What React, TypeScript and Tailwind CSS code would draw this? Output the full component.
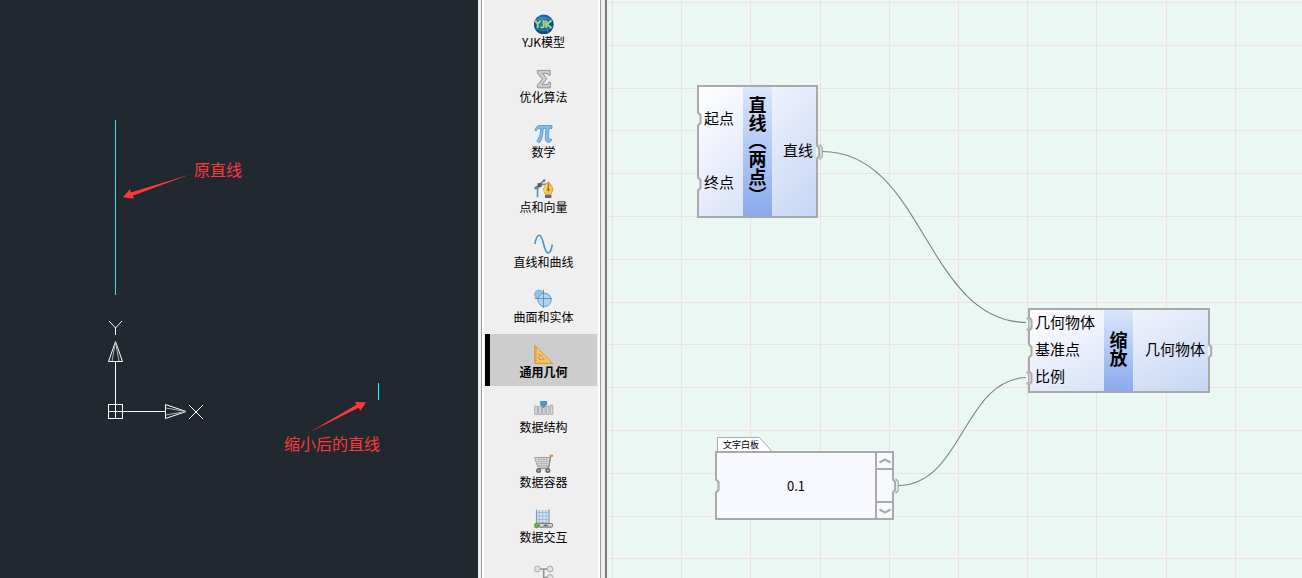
import type { ReactNode } from "react";

const ICON = "block h-5 w-5 shrink-0";

function GlobeIcon() {
  return (
    <svg className={ICON} viewBox="0 0 20 20" aria-hidden="true">
      <defs>
        <radialGradient id="globe" cx="45%" cy="35%" r="65%">
          <stop offset="0" stopColor="#2f8fc4" />
          <stop offset="0.6" stopColor="#15589c" />
          <stop offset="1" stopColor="#0c3c7c" />
        </radialGradient>
      </defs>
      <circle cx="9.800" cy="10.500" r="9.900" fill="url(#globe)" />
      <path d="M1.500 7C6 3 13 2.500 18 6.500M2 14C7 17.500 14 17 18.500 13M5 2C9 5 13 11 14 18.500" fill="none" stroke="#5fb2dc" strokeWidth="0.600" />
      <path d="M1.200 6.500l2.500 3.700L6.400 6.500M3.700 10v4M9.800 6.500v5.500c0 1.800-2.700 2.100-3.300.5M12.200 6.500v7.500M17.500 6.500l-4.800 3.800 4.800 3.700" fill="none" stroke="#a4dc74" strokeWidth="1.900" />
    </svg>
  );
}

function SigmaIcon() {
  return (
    <svg className={ICON} viewBox="0 0 20 20" aria-hidden="true">
      <path d="M3.400 1.400h12.800v4.800h-2L13.400 4.400H8.800l4.200 5.300-4.800 5.700h5.400l1-2.200h2l-.5 5.600H3.400v-2.600l5-6.200-5-6z" fill="#cbcbcb" stroke="#959595" strokeWidth="1" />
    </svg>
  );
}

function PiIcon() {
  return (
    <svg className={ICON} viewBox="0 0 20 20" aria-hidden="true">
      <path d="M1 6.500C1.800 3 3.300 1.500 6 1.500h12v2.900h-3c-.3 3.600-.5 7-.2 9.400.3 1.800 1.500 2.200 2.900 1.300-.3 2.200-1.600 3.400-3.300 3.200-2.600-.2-3.200-2.300-3.100-5.300.1-2.900.4-5.800.6-8.600H9.200C9.100 9 8.500 13 7 16.500c-.8 1.800-2 2.500-3 1.900-1.300-.8-1-2.200.1-3.300C6 12.300 6.600 8.200 6.700 4.400H5.800c-1.700 0-2.500.6-3.300 2.300z" fill="#7fbdec" stroke="#4b8fc8" strokeWidth="0.800" />
    </svg>
  );
}

function VectorIcon() {
  return (
    <svg className={ICON} viewBox="0 0 20 20" aria-hidden="true">
      <path d="M3.500 18.500V12C3.500 7 7 5 12 5" fill="none" stroke="#4f95bd" strokeWidth="1.600" />
      <path d="M1 9.500L10.500 1" stroke="#686868" strokeWidth="1.200" />
      <circle cx="1.800" cy="9" r="1.400" fill="#777" />
      <circle cx="10.200" cy="1.600" r="1.300" fill="#777" />
      <rect x="3.600" y="4.100" width="4" height="4" fill="#5c5c5c" />
      <path d="M14.300 2.500c2 2.400 4.700 5.600 4.700 8.300l-2 4.700h-5.500l-2-4.700c0-2.700 2.800-5.900 4.800-8.300z" fill="#f6c445" stroke="#c8892b" strokeWidth="0.700" />
      <path d="M14.300 4v6" stroke="#916520" strokeWidth="0.900" />
      <circle cx="14.300" cy="10.800" r="1.200" fill="#8a6327" />
      <path d="M12.800 5.500c-2 2.800-2.600 4.500-1.500 7.500" fill="none" stroke="#ffe99b" strokeWidth="1.100" />
      <rect x="11" y="16" width="6.400" height="3" fill="#686868" />
    </svg>
  );
}

function CurveIcon() {
  return (
    <svg className={ICON} viewBox="0 0 20 20" aria-hidden="true">
      <path d="M.8 10C1.800 5 3 1.200 5.300 1.200c4.300 0 4.300 17.800 8.700 17.800 2.200 0 3.500-3.500 4.300-8.500" fill="none" stroke="#4697c6" strokeWidth="1.600" />
    </svg>
  );
}

function SolidIcon() {
  return (
    <svg className={ICON} viewBox="0 0 20 20" aria-hidden="true">
      <circle cx="5.200" cy="5.600" r="4.600" fill="#91c4ea" stroke="#76a8cf" strokeWidth="0.800" />
      <circle cx="10.500" cy="10.800" r="6.700" fill="#acd4f2" stroke="#5f9dc8" strokeWidth="1" />
      <path d="M9.500 0.500v18.500M0.500 9.500h17.500" stroke="#5d83a1" strokeWidth="0.800" />
    </svg>
  );
}

function SetSquareIcon() {
  return (
    <svg className={ICON} viewBox="0 0 20 20" aria-hidden="true">
      <path fillRule="evenodd" d="M.8 1.200l18 18.200H.8zM5.300 10v5.300h5.200z" fill="#f5c364" stroke="#d0912e" strokeWidth="0.900" />
      <path d="M1.300 4.500h1.500M1.300 7h1.500M1.300 9.500h1.500M1.300 12h1.500M1.300 14.500h1.500M1.300 17h1.500" stroke="#a76d20" strokeWidth="0.700" />
    </svg>
  );
}

function StructureIcon() {
  return (
    <svg className={ICON} viewBox="0 0 20 20" aria-hidden="true">
      <g fill="#d6d6d6" stroke="#a6a6a6" strokeWidth="0.900">
        <rect x="0.600" y="7" width="2.800" height="8.500" rx="0.500" />
        <rect x="4.600" y="7" width="2.800" height="8.500" rx="0.500" />
        <rect x="8.500" y="7.500" width="2.700" height="8" rx="0.500" />
        <rect x="12.200" y="7" width="2.800" height="8.500" rx="0.500" />
        <rect x="16" y="6" width="2.800" height="9.500" rx="0.500" />
      </g>
      <path d="M6.600 2.500h6v3.200L9.600 8.500 6.600 5.700z" fill="#459ddd" stroke="#2673ad" strokeWidth="0.700" />
    </svg>
  );
}

function CartIcon() {
  return (
    <svg className={ICON} viewBox="0 0 20 20" aria-hidden="true">
      <path d="M.6 3.500h15.800L15 13H3.800z" fill="#dcdcdc" stroke="#a0a0a0" strokeWidth="1" />
      <path d="M2.500 5.500h13M3 7.500h12M3.500 9.500h11.500M4 11.500h11M5 4v8M7.500 4v8M10 4v8M12.500 4v8" stroke="#b0b0b0" strokeWidth="0.700" />
      <path d="M18.500 1.800h-1.800L14.800 13 13.500 14.500H4" fill="none" stroke="#8b8b8b" strokeWidth="1.200" />
      <rect x="15.500" y="0.700" width="3.600" height="2" fill="#cf8c3c" />
      <circle cx="4.600" cy="16.500" r="2.500" fill="#656565" />
      <circle cx="13.800" cy="16.500" r="2.500" fill="#656565" />
      <circle cx="4.600" cy="16.500" r="1" fill="#c0c0c0" />
      <circle cx="13.800" cy="16.500" r="1" fill="#c0c0c0" />
    </svg>
  );
}

function ExchangeIcon() {
  return (
    <svg className={ICON} viewBox="0 0 20 20" aria-hidden="true">
      <rect x="2.500" y="1" width="12.500" height="13.500" fill="#d5e5f4" />
      <path d="M2.500 0.500v16M15 0.500v15" stroke="#7e9bb6" strokeWidth="1.200" />
      <path d="M5.500 1v13M8.700 1v13M12 1v13M2.500 3.500h12.500M2.500 7h12.500M2.500 10.500h12.500M2.500 13.500h12.500" stroke="#93b4d3" strokeWidth="0.800" />
      <rect x="5" y="14.500" width="7" height="3.600" rx="1.700" fill="#ddd" stroke="#777" strokeWidth="1.100" />
      <rect x="11.300" y="14.500" width="7.300" height="3.600" rx="1.700" fill="#ddd" stroke="#777" strokeWidth="1.100" />
      <path d="M9.500 16.300h5" stroke="#666" strokeWidth="1" />
      <circle cx="2.700" cy="16.500" r="2.400" fill="#76ad3b" stroke="#4d7d25" strokeWidth="0.600" />
    </svg>
  );
}

function TreeIcon() {
  return (
    <svg className={ICON} viewBox="0 0 20 20" aria-hidden="true">
      <path d="M4 5h12M9.700 5v14M10 13.500h6" fill="none" stroke="#919191" strokeWidth="1.600" />
      <g fill="#e2e2e2" stroke="#999" strokeWidth="0.800">
        <circle cx="3.400" cy="5" r="2.900" />
        <circle cx="16" cy="5" r="2.900" />
        <circle cx="16" cy="13.500" r="2.900" />
      </g>
    </svg>
  );
}

const categories: { label: string; icon: ReactNode; selected?: boolean }[] = [
  { label: "YJK模型", icon: <GlobeIcon /> },
  { label: "优化算法", icon: <SigmaIcon /> },
  { label: "数学", icon: <PiIcon /> },
  { label: "点和向量", icon: <VectorIcon /> },
  { label: "直线和曲线", icon: <CurveIcon /> },
  { label: "曲面和实体", icon: <SolidIcon /> },
  { label: "通用几何", icon: <SetSquareIcon />, selected: true },
  { label: "数据结构", icon: <StructureIcon /> },
  { label: "数据容器", icon: <CartIcon /> },
  { label: "数据交互", icon: <ExchangeIcon /> },
  { label: "", icon: <TreeIcon /> },
];

function Viewport() {
  return (
    <section className="relative min-w-0 flex-[478_1_0px] overflow-hidden bg-[#212830]">
      <svg className="absolute left-0 top-0 h-full w-full" aria-hidden="true">
        <g shapeRendering="crispEdges" strokeWidth="1" fill="none">
          <path d="M115.500 120v175" stroke="#2ee6ee" />
          <path d="M378.500 383v17" stroke="#00ffff" />
          <path d="M108.500 404.500h14v14h-14zM115.500 362v56M108 411.500h57" stroke="#fff" />
        </g>
        <g fill="none" stroke="#fff" strokeWidth="1">
          <path d="M115.500 341.500l-7 20h14zM165.500 404.500v14l20.500-7z" />
          <path d="M115.500 342l-3.500 19M115.500 342l3.500 19M186 411.500l-20-3.500M186 411.500l-20 3.500" stroke="#aeb2b6" />
          <path d="M109 321l6.500 7 6.500-7M115.500 328v7M189 405l14 14M203 405l-14 14" />
        </g>
        <g fill="#fb3838">
          <path d="M123 197.300l7-8.300.7 3.500L190 174.500l-57.300 21.300 1.500 3z" />
          <path d="M366 402.300l-11-.3 1.500 2.700-47.500 27.800 49.500-24.800 2 3z" />
        </g>
      </svg>
      <span className="absolute left-[194px] top-[157px] text-base leading-6 text-[#fb3838]">原直线</span>
      <span className="absolute left-[284px] top-[431px] text-base leading-6 text-[#fb3838]">缩小后的直线</span>
    </section>
  );
}

function Sidebar() {
  return (
    <aside className="flex shrink-0 border-r-2 border-[#7a7a7a] bg-[#efefef] pl-[3px] pr-1">
      <div className="border-x border-[#a0a0a0]">
        <nav className="flex h-full flex-col gap-[3px] overflow-hidden border-x-2 border-white px-px pt-1">
          {categories.map((c, i) => (
            <button
              key={i}
              type="button"
              className={
                "flex h-[52px] w-28 shrink-0 flex-col items-center border-l-[5px] pt-[10px] text-xs leading-4 text-black " +
                (c.selected ? "border-black bg-[#cdcdcd] font-bold" : "border-transparent")
              }
            >
              {c.icon}
              <span>{c.label}</span>
            </button>
          ))}
        </nav>
      </div>
    </aside>
  );
}

function Port({ side, linked, className }: { side: "in" | "out"; linked?: boolean; className: string }) {
  return (
    <svg className={"absolute h-[18px] w-[10px] " + className} viewBox="0 0 10 18" aria-hidden="true">
      {side === "in" ? (
        <>
          <path d="M0 2h3l2.500 3v8L3 16H0z" fill="#ebf7f3" />
          <path d="M3 1v1.500L5.500 5v8L3 15.500V17" fill="none" stroke="#a9a9a9" strokeWidth="2" />
          {linked && <path d="M.5 2.500L2.800 5.500v7L.5 15.500" fill="none" stroke="#a9a9a9" strokeWidth="1.400" />}
        </>
      ) : (
        <>
          <path d="M2 2.500h1L5 5v8l-2 2.500H2z" fill="#eef2fc" />
          <path d="M3 1v1.500L5.200 5v8L3 15.500V17" fill="none" stroke="#a9a9a9" strokeWidth="2" />
          {linked && <path d="M5.500 1.500L8.200 4.500v9L5.500 16.500" fill="none" stroke="#a9a9a9" strokeWidth="1.300" />}
        </>
      )}
    </svg>
  );
}

type NodeProps = {
  title: string;
  inputs: { label: string; linked?: boolean }[];
  output: { label: string; linked?: boolean };
  className: string;
  columns: string;
};

function GraphNode({ title, inputs, output, className, columns }: NodeProps) {
  return (
    <article
      className={
        "absolute grid border-2 border-[#a9a9a9] bg-linear-to-br from-white via-[#e4eafa] to-[#c5d6f4] text-[15px] leading-5 text-black " +
        columns + " " + className
      }
    >
      <div className="flex flex-col">
        {inputs.map((p) => (
          <div key={p.label} className="relative flex flex-1 items-center whitespace-nowrap pb-[3px] pl-[5px]">
            <Port side="in" linked={p.linked} className="-left-1 top-1/2 -translate-y-1/2" />
            {p.label}
          </div>
        ))}
      </div>
      <h2 className="flex items-center justify-center bg-linear-to-b from-[#dbe6fb] to-[#8aa9ee] pb-[3px] text-lg leading-none font-bold [writing-mode:vertical-rl]">
        {title}
      </h2>
      <div className="relative flex items-center justify-end whitespace-nowrap pb-[3px] pr-[3px]">
        {output.label}
        <Port side="out" linked={output.linked} className="-right-2 top-1/2 -translate-y-1/2" />
      </div>
    </article>
  );
}

function TextBoard() {
  return (
    <article className="absolute left-[108px] top-[437px] w-[179px]">
      <div className="relative ml-0.5 h-[14px] w-14">
        <svg className="absolute left-0 top-0 h-[15px] w-14" viewBox="0 0 56 15" aria-hidden="true">
          <path d="M.5 15V.5h42L55.500 15" fill="#fff" stroke="#a9a9a9" />
        </svg>
        <label htmlFor="board" className="relative block pl-[6px] text-[9px] leading-[15px] text-black">
          文字白板
        </label>
      </div>
      <div className="relative flex h-[69px] border-2 border-[#a9a9a9] bg-[#f8f8ff]">
        <input
          id="board"
          defaultValue="0.1"
          className="min-w-0 flex-1 bg-transparent text-center text-[13px] text-black outline-none"
        />
        <div className="flex w-[17px] flex-col justify-between border-l-2 border-[#a9a9a9]">
          <button type="button" aria-label="向上" className="flex h-[17px] items-center justify-center border-b-2 border-[#a9a9a9]">
            <svg className="h-[6px] w-3" viewBox="0 0 12 6" aria-hidden="true">
              <path d="M.5 4.500L6 1.500l5.500 3" fill="none" stroke="#a9a9a9" strokeWidth="2" />
            </svg>
          </button>
          <button type="button" aria-label="向下" className="flex h-[17px] items-center justify-center border-t-2 border-[#a9a9a9]">
            <svg className="h-[6px] w-3" viewBox="0 0 12 6" aria-hidden="true">
              <path d="M.5 1.500L6 4.500l5.500-3" fill="none" stroke="#a9a9a9" strokeWidth="2" />
            </svg>
          </button>
        </div>
        <Port side="in" className="-left-1 top-1/2 -translate-y-1/2" />
        <Port side="out" linked className="-right-2 top-1/2 -translate-y-1/2" />
      </div>
    </article>
  );
}

const columnLines = Array.from({ length: 30 }, (_, i) => Math.round(5 + i * 69.2) + 0.5);
const rowLines = Array.from({ length: 30 }, (_, i) => Math.round(2 + i * 42.8) + 0.5);

function Canvas() {
  return (
    <main className="relative min-w-0 flex-[695_1_0px] overflow-hidden bg-[#ebf7f3]">
      <svg className="absolute left-0 top-0 h-full w-full" aria-hidden="true">
        <g stroke="#f0e0e1" strokeWidth="1">
          {columnLines.map((x) => (
            <line key={x} x1={x} x2={x} y1="0" y2="100%" />
          ))}
          {rowLines.map((y) => (
            <line key={y} x1="0" x2="100%" y1={y} y2={y} />
          ))}
        </g>
        <g fill="none" stroke="#7d8583" strokeWidth="1.100">
          <path d="M215 151.500C318 151.500 318 322.500 421 322.500" />
          <path d="M291 485.500C356 485.500 356 377.500 421 377.500" />
        </g>
      </svg>
      <GraphNode
        title="直线（两点）"
        inputs={[{ label: "起点" }, { label: "终点" }]}
        output={{ label: "直线", linked: true }}
        className="left-[90px] top-[85px] h-[133px] w-[121px]"
        columns="grid-cols-[44px_29px_1fr]"
      />
      <GraphNode
        title="缩放"
        inputs={[{ label: "几何物体", linked: true }, { label: "基准点" }, { label: "比例", linked: true }]}
        output={{ label: "几何物体" }}
        className="left-[421px] top-[308px] h-[85px] w-[182px]"
        columns="grid-cols-[74px_29px_1fr]"
      />
      <TextBoard />
    </main>
  );
}

export default function App() {
  return (
    <div className="flex h-screen overflow-hidden font-['Noto_Sans_CJK_SC',sans-serif]">
      <Viewport />
      <Sidebar />
      <Canvas />
    </div>
  );
}
